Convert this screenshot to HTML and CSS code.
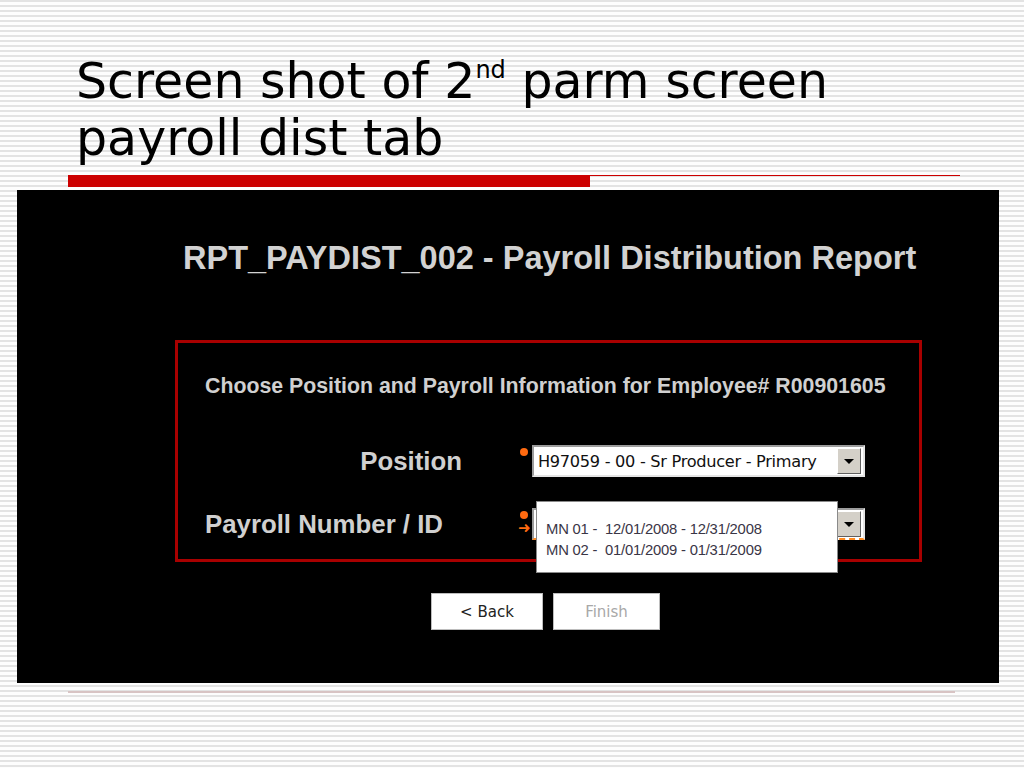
FILE: index.html
```html
<!DOCTYPE html>
<html lang="en">
<head>
    <meta charset="UTF-8">
    <title>Screen shot of 2nd parm screen payroll dist tab</title>
    <link rel="stylesheet" href="styles.css">
</head>
<body>
    <div class="slide">
        <h1 class="slide-title">Screen shot of 2<sup>nd</sup> parm screen<br>payroll dist tab</h1>
        <div class="title-rule">
            <div class="rule-thick"></div>
            <div class="rule-thin"></div>
        </div>

        <div class="shot">
            <h2 class="report-title">RPT_PAYDIST_002 - Payroll Distribution Report</h2>

            <div class="parm-box">
                <p class="parm-intro">Choose Position and Payroll Information for Employee# R00901605</p>

                <div class="parm-row row-position">
                    <span class="parm-label">Position</span>
                    <span class="marks"><span class="req-dot"></span></span>
                    <div class="select">
                        <span class="select-text">H97059 - 00 - Sr Producer - Primary</span>
                        <span class="select-btn"><span class="arrow"></span></span>
                    </div>
                </div>

                <div class="parm-row row-payroll">
                    <span class="parm-label">Payroll Number / ID</span>
                    <span class="marks">
                        <span class="req-dot"></span>
                        <span class="req-arrow">&#10140;</span>
                    </span>
                    <div class="select focused">
                        <span class="select-text"></span>
                        <span class="select-btn"><span class="arrow"></span></span>
                        <ul class="dropdown">
                            <li>MN 01 - &nbsp;12/01/2008 - 12/31/2008</li>
                            <li>MN 02 - &nbsp;01/01/2009 - 01/31/2009</li>
                        </ul>
                    </div>
                </div>
            </div>

            <div class="buttons">
                <button class="btn">&lt; Back</button>
                <button class="btn" disabled>Finish</button>
            </div>
        </div>

        <div class="bottom-rule"></div>
    </div>
</body>
</html>
```

FILE: styles.css
```css
html, body {
    margin: 0;
    padding: 0;
}
body {
    width: 1024px;
    height: 768px;
    overflow: hidden;
    background-color: #ffffff;
    background-image: repeating-linear-gradient(to bottom, #e3e3e3 0, #e3e3e3 2px, #fdfdfd 2px, #fdfdfd 5px);
    font-family: "DejaVu Sans", Verdana, sans-serif;
}
.slide {
    padding-top: 53px;
}
.slide-title {
    margin: 0 0 0 76px;
    font-weight: normal;
    font-size: 49px;
    line-height: 57px;
    color: #000;
    height: 117px;
}
.slide-title sup {
    font-size: 24px;
    vertical-align: 20px;
    line-height: 0;
}
.title-rule {
    display: flex;
    align-items: flex-start;
    margin: 5px 0 0 68px;
    width: 892px;
    height: 12px;
}
.rule-thick {
    width: 522px;
    height: 12px;
    background: #cc0000;
}
.rule-thin {
    flex: 1;
    height: 1px;
    background: #cc0000;
}
.shot {
    margin: 3px 0 0 17px;
    width: 982px;
    height: 493px;
    background: #000;
    box-sizing: border-box;
    padding-top: 50px;
    font-family: "Liberation Sans", Arial, sans-serif;
}
.report-title {
    margin: 0 0 0 166px;
    font-size: 32.5px;
    font-weight: bold;
    color: #d2d2d2;
    line-height: 36px;
}
.parm-box {
    margin: 64px 0 0 158px;
    width: 747px;
    height: 222px;
    box-sizing: border-box;
    border: 3px solid #a80000;
    padding: 31px 0 0 27px;
}
.parm-intro {
    margin: 0;
    font-size: 21.3px;
    font-weight: bold;
    color: #d0d0d0;
    line-height: 24px;
}
.parm-row {
    display: flex;
    align-items: center;
    height: 32px;
}
.row-position {
    margin-top: 47px;
}
.row-payroll {
    margin-top: 31px;
}
.parm-label {
    width: 257px;
    font-size: 25.8px;
    font-weight: bold;
    color: #d0d0d0;
}
.row-position .parm-label {
    text-align: right;
}
.marks {
    width: 70px;
    padding-left: 58px;
    box-sizing: border-box;
    display: flex;
    flex-direction: column;
    align-self: flex-start;
    align-items: flex-start;
}
.req-dot {
    width: 8px;
    height: 8px;
    border-radius: 50%;
    background: #ff6a10;
    margin-top: 3px;
}
.req-arrow {
    color: #ff6a10;
    font-size: 15px;
    line-height: 14px;
    margin-top: 2px;
    margin-left: -2px;
    font-weight: bold;
    font-family: "DejaVu Sans", sans-serif;
}
.select {
    position: relative;
    width: 333px;
    height: 32px;
    box-sizing: border-box;
    border: 2px solid #9c9c9c;
    border-right-color: #e4e4e4;
    border-bottom-color: #e4e4e4;
    background: #fff;
    display: flex;
    align-items: center;
}
.select.focused {
    border-bottom: 2px dashed #ff8a20;
}
.select-text {
    flex: 1;
    padding-left: 4px;
    font-family: "DejaVu Sans", Tahoma, sans-serif;
    font-size: 16.2px;
    color: #111;
    letter-spacing: -0.3px;
}
.select-btn {
    width: 22px;
    height: 24px;
    margin-right: 2px;
    background: #d4d0c8;
    border: 1px solid #fff;
    border-right-color: #606060;
    border-bottom-color: #606060;
    display: flex;
    align-items: center;
    justify-content: center;
}
.arrow {
    width: 0;
    height: 0;
    border-left: 5px solid transparent;
    border-right: 5px solid transparent;
    border-top: 5px solid #000;
}
.dropdown {
    position: absolute;
    left: 2px;
    top: -9px;
    width: 302px;
    height: 72px;
    box-sizing: border-box;
    margin: 0;
    padding: 17px 0 0 9px;
    list-style: none;
    background: #fff;
    border: 1px solid #8a8a8a;
    font-family: "Liberation Sans", Arial, sans-serif;
    font-size: 14.8px;
    line-height: 21px;
    color: #3a3646;
    letter-spacing: -0.2px;
}
.buttons {
    display: flex;
    gap: 10px;
    margin: 31px 0 0 414px;
}
.btn {
    width: 112px;
    height: 37px;
    background: #fff;
    border: 1px solid #bdbdbd;
    font-family: "DejaVu Sans", Tahoma, sans-serif;
    font-size: 15px;
    color: #222;
    padding: 0;
}
.btn:disabled {
    width: 107px;
    color: #a8a8a8;
}
.bottom-rule {
    margin: 8px 0 0 68px;
    width: 887px;
    height: 2px;
    background: #d8c4c4;
}
```
